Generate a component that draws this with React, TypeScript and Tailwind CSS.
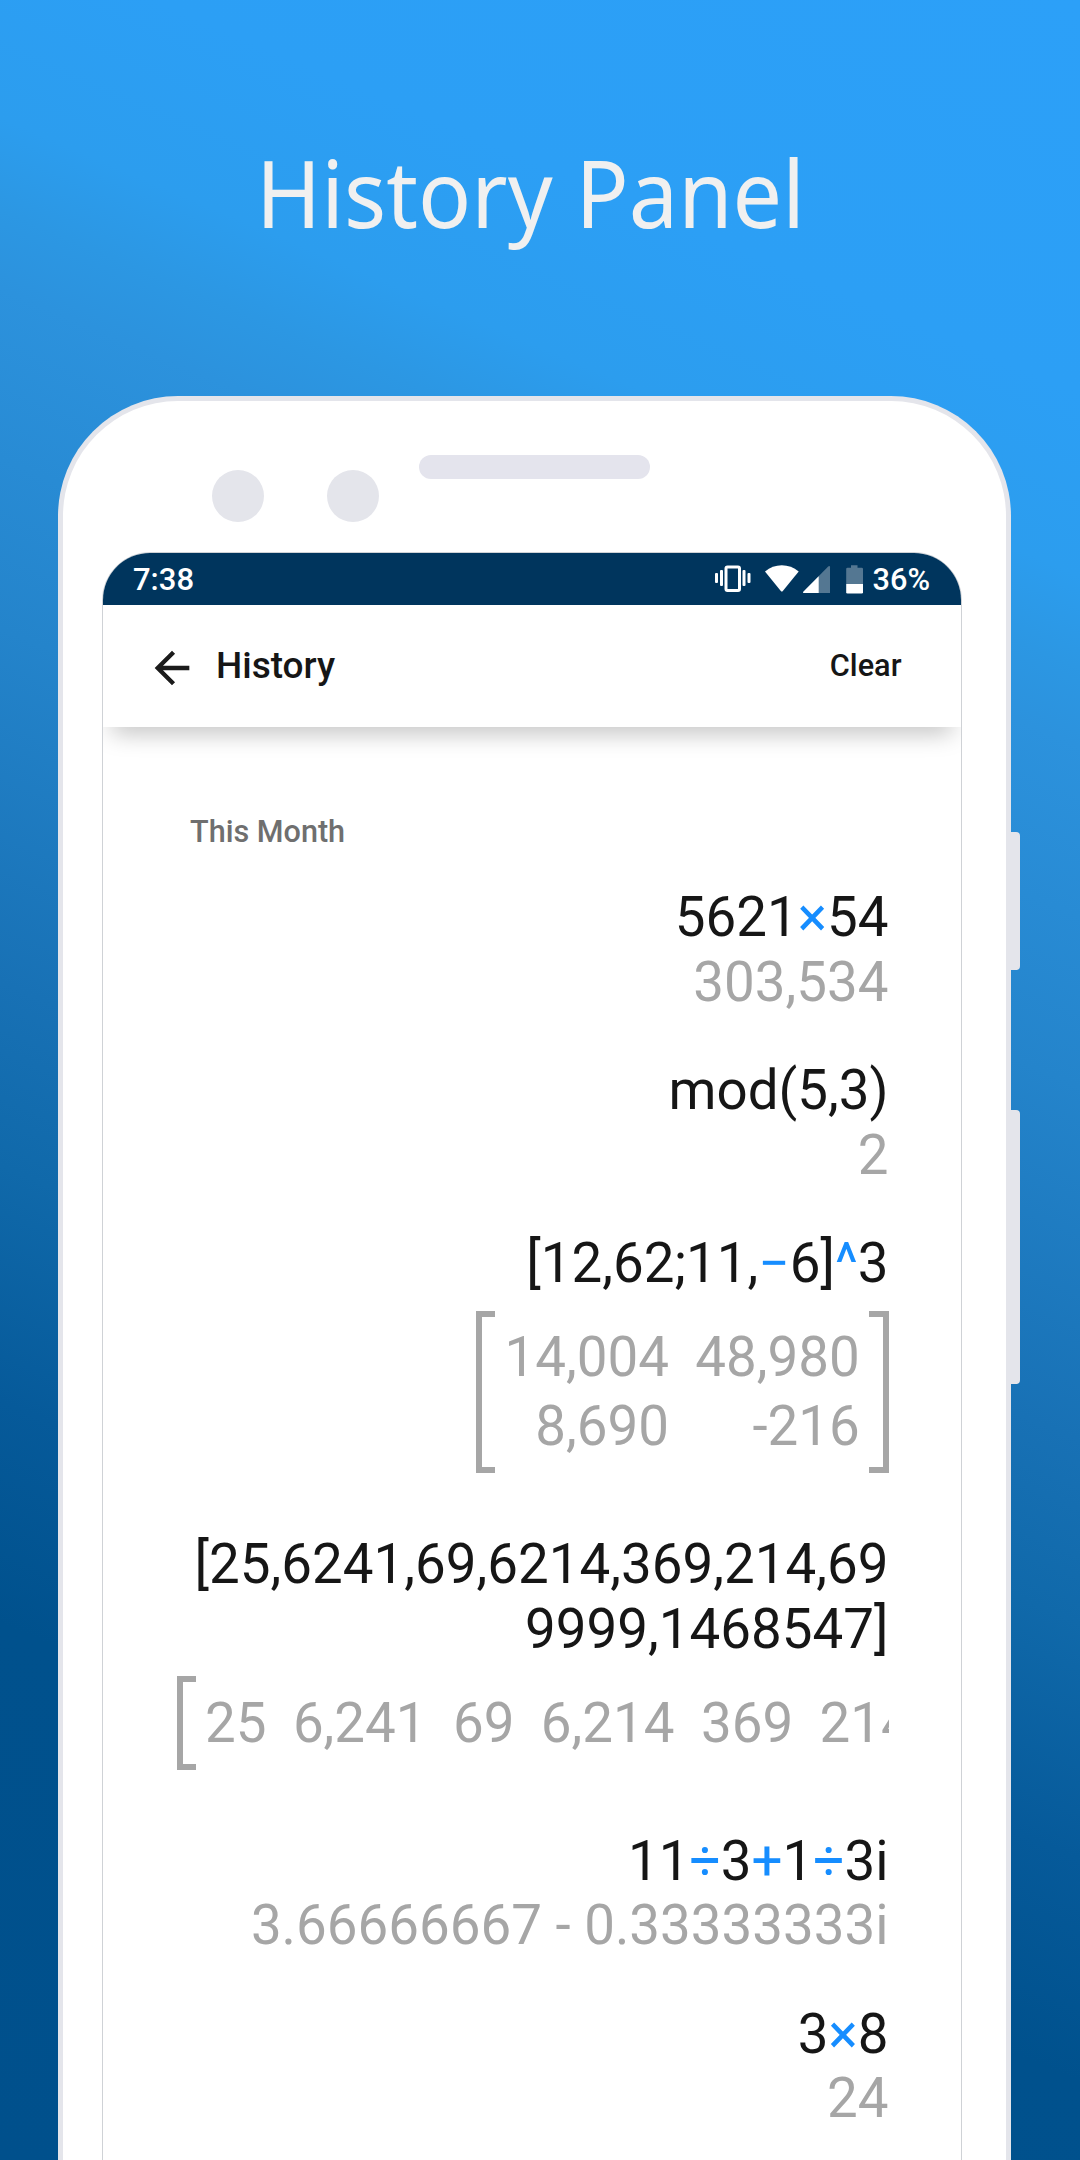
import React from "react";

const OPERATORS = "×÷+−^";

function Expression({ lines }: { lines: string[] }) {
  return (
    <div className="text-[#161616]">
      {lines.map((line) => (
        <div key={line} className="h-[64.5px]">
          {line.split("").map((c, i) =>
            OPERATORS.includes(c) ? (
              <span key={i} className="text-[#168dff]">{c}</span>
            ) : (
              c
            ),
          )}
        </div>
      ))}
    </div>
  );
}

function Matrix({ rows }: { rows: string[][] }) {
  return (
    <div className="my-[15px] flex overflow-hidden">
      <div className="ml-auto flex shrink-0 text-[#a6a6a6]">
        <div className="w-[19px] shrink-0 border-y-6 border-l-6 border-[#a6a6a6]" />
        <div className="flex gap-[26.4px] px-[9.3px] py-[14.5px]">
          {rows[0].map((_, col) => (
            <div key={col} className="flex flex-col gap-[4.5px]">
              {rows.map((row, r) => (
                <div key={r} className="h-[64.5px]">{row[col]}</div>
              ))}
            </div>
          ))}
        </div>
        <div className="w-[19.5px] shrink-0 border-y-6 border-r-6 border-[#a6a6a6]" />
      </div>
    </div>
  );
}

function WideMatrix({ values }: { values: string[] }) {
  return (
    <div className="my-[15px] flex overflow-hidden text-[#a6a6a6]">
      <div className="w-[19px] shrink-0 border-y-6 border-l-6 border-[#a6a6a6]" />
      <div className="flex shrink-0 gap-[26.4px] px-[9px] py-[14.5px]">
        {values.map((v) => (
          <div key={v} className="h-[64.5px]">{v}</div>
        ))}
      </div>
    </div>
  );
}

function Result({ children }: { children: React.ReactNode }) {
  return <div className="h-[64.5px] text-[#a6a6a6]">{children}</div>;
}

function StatusIcons() {
  return (
    <svg width="150" height="32" viewBox="0 0 150 32" fill="#fff">
      <rect x="0" y="10" width="3" height="10" rx="1" />
      <rect x="5" y="7" width="3" height="16" rx="1" />
      <rect x="11" y="4" width="13.5" height="23.5" rx="1.5" fill="none" stroke="#fff" strokeWidth="3" />
      <rect x="27.5" y="7" width="3" height="16" rx="1" />
      <rect x="32.5" y="10" width="3" height="10" rx="1" />
      <path d="M50 8.4Q57.5 2.3 66.8 2.3Q76.2 2.3 83.7 8.4L67.8 28Q66.8 29 65.8 28Z" />
      <path d="M115 4.2V30H88.5Q87.6 29.6 88.3 28.7L113.2 3.4Q115 2.4 115 4.2Z" fillOpacity=".33" />
      <path d="M103.7 13.2V30H88.5Q87.6 29.6 88.3 28.7Z" />
      <path d="M136 2.3h6.5v2.5h4.2q1.3 0 1.3 1.3V21h-16.8V6.1q0-1.3 1.3-1.3h3.5Z" fillOpacity=".33" />
      <path d="M131.2 21H148v8.2q0 1.3-1.3 1.3h-14.2q-1.3 0-1.3-1.3Z" />
    </svg>
  );
}

export default function App() {
  return (
    <div className="relative flex h-[2160px] w-[1080px] flex-col overflow-hidden bg-[linear-gradient(203deg,#2ca0f8_0%,#2c9ff5_15%,#2c9dee_22%,#2c97e3_25.5%,#2c92dd_28.5%,#2484cb_41.5%,#1871b5_55%,#1069aa_62%,#065a9a_71%,#00518d_79.5%,#00508c_100%)] font-[Roboto,sans-serif]">
      <h1 className="mt-[128px] h-[128px] origin-left translate-x-[256px] scale-x-[0.937] whitespace-nowrap font-['Noto_Sans',sans-serif] text-[94px] leading-[128px] text-[#f0f0f0]">
        History Panel
      </h1>

      <div className="relative ml-[58px] mt-[140px] h-[1900px] w-[953px] shrink-0 rounded-t-[120px] border-x-[5.5px] border-t-[5px] border-[#e4e5eb] bg-white">
        <div className="absolute -right-[14px] top-[431px] h-[138px] w-[9px] rounded-r-[4px] bg-[#e4e5eb]" />
        <div className="absolute -right-[14px] top-[709px] h-[274px] w-[9px] rounded-r-[4px] bg-[#e4e5eb]" />

        <div className="flex h-[151px] items-start pl-[149px]">
          <div className="mt-[69px] size-[52px] rounded-full bg-[#e4e5eb]" />
          <div className="ml-[63px] mt-[69px] size-[52px] rounded-full bg-[#e4e5eb]" />
          <div className="ml-[40px] mt-[54px] h-[24px] w-[231px] rounded-full bg-[#e4e4ed]" />
        </div>

        <div className="ml-[39px] h-[1740px] w-[860px] overflow-hidden rounded-t-[48px] border border-[#cfd2d6] bg-white">
          <div className="flex h-[51.5px] items-center bg-[#00355d] text-[31px] font-medium text-white">
            <span className="ml-[30px] pt-[2px]">7:38</span>
            <div className="ml-auto flex items-center">
              <StatusIcons />
              <span className="ml-[8px] mr-[31px] pt-[2px] text-[30.7px]">36%</span>
            </div>
          </div>

          <div className="relative flex h-[122.5px] items-center bg-white text-[#161616]">
            <svg className="ml-[43px] mt-[4px]" width="52" height="52" viewBox="0 0 24 24" fill="#1b1b1b">
              <path d="M20 11H7.83l5.59-5.59L12 4l-8 8 8 8 1.41-1.41L7.83 13H20v-2z" />
            </svg>
            <span className="ml-[18px] text-[37px] font-medium">History</span>
            <span className="ml-auto mr-[59.5px] text-[30.7px] font-medium">Clear</span>
          </div>
          <div className="relative z-0 h-0">
            <div className="absolute inset-x-0 top-0 h-[50px] overflow-hidden">
              <div className="-mt-[40px] h-[40px] shadow-[0_14px_24px_-9px_rgba(0,0,0,0.28)]" />
            </div>
          </div>

          <div className="pl-[74px] pr-[72.5px]">
            <div className="ml-[13px] pt-[85px] text-[30.6px] leading-[40px] font-medium text-[#6f6f6f]">This Month</div>
            <div className="mt-[33px] flex flex-col gap-[44px] whitespace-pre text-right text-[54.7px] leading-[64.5px]">
              <div>
                <Expression lines={["5621×54"]} />
                <Result>303,534</Result>
              </div>
              <div>
                <Expression lines={["mod(5,3)"]} />
                <Result>2</Result>
              </div>
              <div>
                <Expression lines={["[12,62;11,−6]^3"]} />
                <Matrix rows={[["14,004", "48,980"], ["8,690", "-216"]]} />
              </div>
              <div>
                <Expression lines={["[25,6241,69,6214,369,214,69", "9999,1468547]"]} />
                <WideMatrix values={["25", "6,241", "69", "6,214", "369", "214"]} />
              </div>
              <div>
                <Expression lines={["11÷3+1÷3i"]} />
                <Result>3.66666667 - 0.33333333i</Result>
              </div>
              <div>
                <Expression lines={["3×8"]} />
                <Result>24</Result>
              </div>
            </div>
          </div>
        </div>
      </div>
    </div>
  );
}
